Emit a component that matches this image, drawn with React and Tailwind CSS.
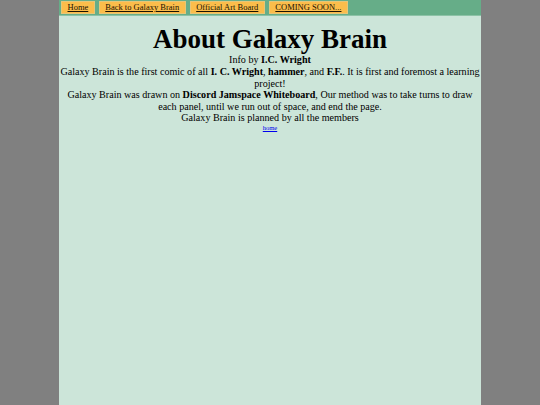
export default function App() {
  const btn =
    "bg-[#fbbd4b] border border-[#e6c679] h-[13px] px-[5.5px] flex items-center text-[8.5px] leading-none text-[#1a1200] underline";
  return (
    <div
      className="min-h-[405px] w-full bg-[#808080]"
      style={{ fontFamily: '"Liberation Serif", "Times New Roman", serif' }}
    >
      <div className="mx-auto w-[422px] min-h-[405px] bg-[#cce5d9] text-black">
        <div className="h-[16px] bg-[#66ad88] flex items-start pt-[1px] pl-[2px] gap-[4px] border-b border-[#8cc2a6]">
          <a className={btn}>Home</a>
          <a className={btn}>Back to Galaxy Brain</a>
          <a className={btn}>Official Art Board</a>
          <a className={btn}>COMING SOON...</a>
        </div>
        <div className="text-center px-[1px]">
          <h1 className="text-[27px] font-bold mt-[8px] leading-[30px]">About Galaxy Brain</h1>
          <div className="text-[10.1px] leading-[11.5px]">
            <p>
              Info by <b>I.C. Wright</b>
            </p>
            <p className="mt-[0.5px]">
              Galaxy Brain is the first comic of all <b>I. C. Wright</b>, <b>hammer</b>, and <b>F.F.</b>. It is first
              and foremost a learning project!
            </p>
            <p>
              Galaxy Brain was drawn on <b>Discord Jamspace Whiteboard</b>, Our method was to take turns to draw
              each panel, until we run out of space, and end the page.
            </p>
            <p>Galaxy Brain is planned by all the members</p>
            <p className="text-[6.5px] leading-[8px]">
              <a className="text-[#0000ee] underline">home</a>
            </p>
          </div>
        </div>
      </div>
    </div>
  );
}
